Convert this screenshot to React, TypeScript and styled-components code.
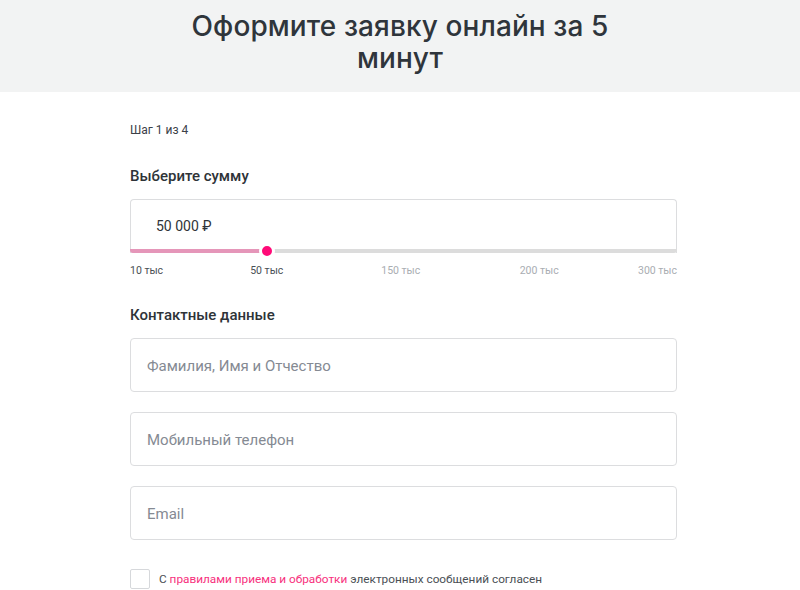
import React from "react";
import styled, { createGlobalStyle } from "styled-components";

const Global = createGlobalStyle`
  html, body { margin: 0; padding: 0; background: #fff; }
  body { font-family: Roboto, "Liberation Sans", sans-serif; color: #2e3338; }
  * { box-sizing: border-box; }
`;

const Header = styled.header`
  background: #f2f3f3;
  height: 92px;
  display: flex;
  justify-content: center;
  padding-top: 10px;
`;

const Title = styled.h1`
  margin: 0;
  width: 470px;
  text-align: center;
  font-family: Inter, "Noto Sans", sans-serif;
  font-weight: 500;
  font-size: 28px;
  line-height: 32px;
  color: #2f353b;
  letter-spacing: 0.1px;
`;

const Main = styled.main`
  width: 547px;
  margin-left: 130px;
  padding-top: 30px;
  display: flex;
  flex-direction: column;
`;

const Step = styled.div`
  font-size: 12px;
  line-height: 16px;
  color: #3c4148;
`;

const SectionTitle = styled.h2<{ $top: number }>`
  margin: ${(p) => p.$top}px 0 0;
  font-size: 15px;
  line-height: 20px;
  font-weight: 500;
  color: #2e3338;
`;

const AmountBox = styled.div`
  margin-top: 13px;
  height: 54px;
  border: 1px solid #dcdddf;
  border-bottom: none;
  border-radius: 4px 4px 0 0;
  display: flex;
  flex-direction: column;
`;

const AmountValue = styled.div`
  flex: 1;
  display: flex;
  align-items: center;
  padding-left: 25px;
  padding-top: 2px;
  font-size: 14px;
  color: #2e3338;
`;

const Track = styled.div`
  height: 4px;
  margin: 0 -1px;
  background: #dcdcdc;
  border-radius: 0 0 3px 3px;
  position: relative;
`;

const Fill = styled.div`
  height: 100%;
  background: #e596b9;
  border-radius: 0 0 0 3px;
`;

const Thumb = styled.div`
  position: absolute;
  top: 50%;
  width: 16px;
  height: 16px;
  border-radius: 50%;
  background: #ff0a78;
  border: 3px solid #fff;
  transform: translate(-50%, -50%);
`;

const Scale = styled.div`
  position: relative;
  height: 14px;
  margin-top: 11px;
`;

const Mark = styled.span<{ $active: boolean }>`
  position: absolute;
  top: 0;
  font-size: 10.5px;
  line-height: 14px;
  white-space: nowrap;
  color: ${(p) => (p.$active ? "#4a4f55" : "#a9adb2")};
`;

const Field = styled.input`
  display: block;
  width: 100%;
  height: 54px;
  border: 1px solid #dcdddf;
  border-radius: 4px;
  padding: 2px 16px 0;
  font-family: Roboto, "Liberation Sans", sans-serif;
  font-size: 15px;
  color: #2e3338;
  outline: none;
  background: #fff;
  &::placeholder { color: #858a93; }
`;

const Fields = styled.div`
  margin-top: 13px;
  display: flex;
  flex-direction: column;
  gap: 20px;
`;

const Agree = styled.label`
  margin-top: 29px;
  display: flex;
  align-items: center;
  gap: 9px;
  font-size: 11.8px;
  color: #4a4f55;
`;

const Box = styled.span`
  width: 20px;
  height: 20px;
  border: 1px solid #d6d8db;
  border-radius: 2px;
  flex: none;
`;

const Link = styled.a`
  color: #f7307d;
  text-decoration: none;
`;

const marks = [
  { label: "10 тыс", pos: 0, align: "left" },
  { label: "50 тыс", pos: 25, align: "center" },
  { label: "150 тыс", pos: 49.5, align: "center" },
  { label: "200 тыс", pos: 74.8, align: "center" },
  { label: "300 тыс", pos: 100, align: "right" },
];

export default function App() {
  const value = 25;
  return (
    <>
      <Global />
      <Header>
        <Title>Оформите заявку онлайн за 5 минут</Title>
      </Header>
      <Main>
        <Step>Шаг 1 из 4</Step>
        <SectionTitle $top={28}>Выберите сумму</SectionTitle>
        <AmountBox>
          <AmountValue>50 000 ₽</AmountValue>
          <Track>
            <Fill style={{ width: `${value - 0.7}%` }} />
            <Thumb style={{ left: `${value}%` }} />
          </Track>
        </AmountBox>
        <Scale>
          {marks.map((m, i) => (
            <Mark
              key={m.label}
              $active={i < 2}
              style={{
                left: `${m.pos}%`,
                transform:
                  m.align === "left"
                    ? "none"
                    : m.align === "right"
                    ? "translateX(-100%)"
                    : "translateX(-50%)",
              }}
            >
              {m.label}
            </Mark>
          ))}
        </Scale>
        <SectionTitle $top={27}>Контактные данные</SectionTitle>
        <Fields>
          <Field placeholder="Фамилия, Имя и Отчество" />
          <Field placeholder="Мобильный телефон" />
          <Field placeholder="Email" />
        </Fields>
        <Agree>
          <Box />
          <span>
            С <Link>правилами приема и обработки</Link> электронных сообщений согласен
          </span>
        </Agree>
      </Main>
    </>
  );
}
